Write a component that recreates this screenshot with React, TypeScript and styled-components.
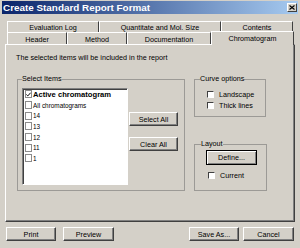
import React from "react";
import styled, { createGlobalStyle } from "styled-components";

const FACE = "#d4d0c8";
const SHADOW = "#808080";
const DARK = "#404040";

const GlobalStyle = createGlobalStyle`
  html, body {
    margin: 0;
    padding: 0;
    background: ${FACE};
  }
  body {
    font-family: "Liberation Sans", Arial, sans-serif;
  }
`;

const Window = styled.div`
  width: 300px;
  height: 248px;
  box-sizing: border-box;
  padding: 1px 2px 0 2px;
  background: ${FACE};
  font-size: 7.2px;
  color: #000;
  display: flex;
  flex-direction: column;
  overflow: hidden;
`;

const TitleBar = styled.div`
  height: 13px;
  display: flex;
  align-items: center;
  justify-content: space-between;
  padding: 0 1px 0 1px;
  background: linear-gradient(to right, #0a246a, #a6caf0);
`;

const Title = styled.span`
  color: #fff;
  font-weight: bold;
  font-size: 9.9px;
  line-height: 13px;
  white-space: nowrap;
`;

const CloseButton = styled.div`
  width: 10px;
  height: 9px;
  box-sizing: border-box;
  background: ${FACE};
  border: 1px solid;
  border-color: #fff ${DARK} ${DARK} #fff;
  display: flex;
  align-items: center;
  justify-content: center;
`;

const TabStrip = styled.div`
  margin-top: 7px;
  margin-left: 5px;
  display: flex;
  flex-direction: column;
`;

const TabRow = styled.div<{ $h: number }>`
  display: flex;
  align-items: flex-start;
  height: ${(p) => p.$h}px;
`;

const Tab = styled.div<{ $w: number; $active?: boolean; $pt?: number }>`
  width: ${(p) => p.$w}px;
  height: ${(p) => (p.$active ? 14 : 12)}px;
  margin-top: ${(p) => (p.$active ? -1 : 0)}px;
  box-sizing: border-box;
  padding-top: ${(p) => p.$pt ?? 0}px;
  background: ${FACE};
  border-top: 1px solid #fff;
  border-left: 1px solid #fff;
  border-right: 1px solid ${DARK};
  display: flex;
  justify-content: center;
  align-items: ${(p) => (p.$active ? "flex-start" : "center")};
  line-height: 9px;
  white-space: nowrap;
  position: ${(p) => (p.$active ? "relative" : "static")};
  z-index: ${(p) => (p.$active ? 1 : "auto")};
`;

const Panel = styled.div`
  margin-left: 3px;
  width: 290px;
  height: 178px;
  box-sizing: border-box;
  border: 1px solid;
  border-color: #fff ${DARK} ${DARK} #fff;
  box-shadow: inset -1px -1px ${SHADOW};
  padding: 8px 0 0 10px;
`;

const Description = styled.div`
  line-height: 10px;
  white-space: nowrap;
`;

const MainRow = styled.div`
  display: flex;
  align-items: flex-start;
  margin-top: 11px;
  gap: 9px;
`;

const Group = styled.fieldset<{ $w: number; $h: number; $pl: number }>`
  margin: 0 0 0 ${(p) => (p.$w === 168 ? 1 : 0)}px;
  padding: 0 0 0 ${(p) => p.$pl}px;
  min-inline-size: 0;
  width: ${(p) => p.$w}px;
  height: ${(p) => p.$h}px;
  box-sizing: border-box;
  border: 1px solid #9c9a96;
`;

const Legend = styled.legend`
  padding: 0;
  line-height: 10px;
  white-space: nowrap;
`;

const RightColumn = styled.div`
  display: flex;
  flex-direction: column;
  gap: 22px;
`;

const SelectBody = styled.div`
  display: flex;
  align-items: flex-start;
  padding-top: 4px;
`;

const ListBox = styled.div`
  width: 106px;
  height: 97px;
  box-sizing: border-box;
  background: #fff;
  border: 1px solid;
  border-color: ${SHADOW} #fff #fff ${SHADOW};
  box-shadow: inset 1px 1px ${DARK};
  padding: 0 0 0 1px;
`;

const ListItem = styled.div<{ $bold?: boolean }>`
  height: 10.7px;
  display: flex;
  align-items: center;
  padding-left: 1px;
  font-size: ${(p) => (p.$bold ? 7.6 : 6.4)}px;
  font-weight: ${(p) => (p.$bold ? "bold" : "normal")};
  white-space: nowrap;
`;

const ItemBox = styled.span`
  width: 7px;
  height: 8px;
  box-sizing: border-box;
  border: 1px solid #8c8c8c;
  margin-right: 1px;
  flex: none;
  display: flex;
  align-items: center;
  justify-content: center;
`;

const ButtonColumn = styled.div`
  display: flex;
  flex-direction: column;
  gap: 11px;
  margin-left: 1px;
  padding-top: 24px;
`;

const Button = styled.div<{ $w: number; $h?: number; $default?: boolean }>`
  width: ${(p) => p.$w}px;
  height: ${(p) => p.$h ?? 14}px;
  box-sizing: border-box;
  background: ${FACE};
  border: 1px solid;
  border-color: ${(p) => (p.$default ? "#000" : `#fff ${DARK} ${DARK} #fff`)};
  box-shadow: ${(p) =>
    p.$default
      ? `inset 1px 1px #fff, inset -1px -1px ${SHADOW}`
      : `inset -1px -1px ${SHADOW}`};
  display: flex;
  align-items: center;
  justify-content: center;
  white-space: nowrap;
  flex: none;
`;

const OptionList = styled.div<{ $ml: number; $mt: number }>`
  display: flex;
  flex-direction: column;
  margin-left: ${(p) => p.$ml}px;
  margin-top: ${(p) => p.$mt}px;
`;

const Option = styled.label`
  height: 11px;
  display: flex;
  align-items: center;
  gap: 5px;
  white-space: nowrap;
`;

const CheckBox = styled.span`
  width: 7px;
  height: 7px;
  box-sizing: border-box;
  background: #fff;
  border: 1px solid;
  border-color: ${DARK} #fff #fff ${DARK};
  flex: none;
`;

const DefineWrap = styled.div`
  margin: 1px 0 0 5px;
`;

const BottomBar = styled.div`
  display: flex;
  margin: 5px 4px 0 4px;
`;

const ButtonGroup = styled.div<{ $gap: number }>`
  display: flex;
  gap: ${(p) => p.$gap}px;
`;

const Spacer = styled.div`
  flex: 1;
`;

const Check = () => (
  <svg width="7" height="7" viewBox="0 0 7 7">
    <path d="M0.5 3.5 L2.5 5.5 L6.5 1" stroke="#000" strokeWidth="1.4" fill="none" />
  </svg>
);

const items = ["All chromatograms", "14", "13", "12", "11", "1"];

export default function App() {
  return (
    <>
      <GlobalStyle />
      <Window>
        <TitleBar>
          <Title>Create Standard Report Format</Title>
          <CloseButton>
            <svg width="6" height="5" viewBox="0 0 6 5">
              <path d="M0.5 0.5 L5.5 4.5 M5.5 0.5 L0.5 4.5" stroke="#000" strokeWidth="1.1" />
            </svg>
          </CloseButton>
        </TitleBar>

        <TabStrip>
          <TabRow $h={11}>
            <Tab $w={92}>Evaluation Log</Tab>
            <Tab $w={122}>Quantitate and Mol. Size</Tab>
            <Tab $w={72}>Contents</Tab>
          </TabRow>
          <TabRow $h={12}>
            <Tab $w={60} $pt={2}>Header</Tab>
            <Tab $w={60} $pt={2}>Method</Tab>
            <Tab $w={84} $pt={2}>Documentation</Tab>
            <Tab $w={83} $active $pt={2}>Chromatogram</Tab>
          </TabRow>
        </TabStrip>

        <Panel>
          <Description>The selected items will be included in the report</Description>
          <MainRow>
            <Group $w={168} $h={117} $pl={4}>
              <Legend>Select Items</Legend>
              <SelectBody>
                <ListBox>
                  <ListItem $bold>
                    <ItemBox>
                      <Check />
                    </ItemBox>
                    Active chromatogram
                  </ListItem>
                  {items.map((it) => (
                    <ListItem key={it}>
                      <ItemBox />
                      {it}
                    </ListItem>
                  ))}
                </ListBox>
                <ButtonColumn>
                  <Button $w={49}>Select All</Button>
                  <Button $w={49}>Clear All</Button>
                </ButtonColumn>
              </SelectBody>
            </Group>

            <RightColumn>
              <Group $w={72} $h={43} $pl={5}>
                <Legend>Curve options</Legend>
                <OptionList $ml={7} $mt={5}>
                  <Option>
                    <CheckBox />
                    Landscape
                  </Option>
                  <Option>
                    <CheckBox />
                    Thick lines
                  </Option>
                </OptionList>
              </Group>
              <Group $w={73} $h={52} $pl={6}>
                <Legend>Layout</Legend>
                <DefineWrap>
                  <Button $w={51} $h={15} $default>
                    Define...
                  </Button>
                </DefineWrap>
                <OptionList $ml={7} $mt={5}>
                  <Option>
                    <CheckBox />
                    Current
                  </Option>
                </OptionList>
              </Group>
            </RightColumn>
          </MainRow>
        </Panel>

        <BottomBar>
          <ButtonGroup $gap={7}>
            <Button $w={50}>Print</Button>
            <Button $w={51}>Preview</Button>
          </ButtonGroup>
          <Spacer />
          <ButtonGroup $gap={4}>
            <Button $w={50}>Save As...</Button>
            <Button $w={51}>Cancel</Button>
          </ButtonGroup>
        </BottomBar>
      </Window>
    </>
  );
}
